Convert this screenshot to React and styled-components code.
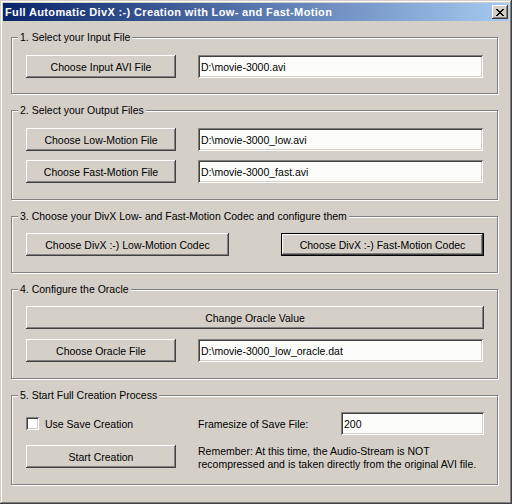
import styled, { createGlobalStyle } from "styled-components";

const GlobalStyle = createGlobalStyle`
  html, body {
    margin: 0;
    padding: 0;
    background: #d4d0c8;
  }
  body {
    font-family: "Liberation Sans", Arial, sans-serif;
    font-size: 10.5px;
    color: #000;
  }
  * {
    box-sizing: border-box;
  }
`;

const Window = styled.div`
  width: 512px;
  height: 504px;
  padding: 3px;
  background: #d4d0c8;
  box-shadow: inset -1px -1px #404040, inset 1px 1px #d4d0c8,
    inset -2px -2px #808080, inset 2px 2px #ffffff;
  display: flex;
  flex-direction: column;
`;

const TitleBar = styled.div`
  height: 18px;
  display: flex;
  align-items: center;
  justify-content: space-between;
  padding: 0 1px 0 2px;
  background: linear-gradient(to right, #0a246a, #a6caf0);
`;

const TitleText = styled.span`
  color: #fff;
  font-weight: bold;
  font-size: 11px;
  letter-spacing: 0.35px;
  white-space: nowrap;
`;

const CloseButton = styled.div`
  width: 16px;
  height: 14px;
  display: flex;
  align-items: center;
  justify-content: center;
  background: #d4d0c8;
  box-shadow: inset -1px -1px #404040, inset 1px 1px #ffffff,
    inset -2px -2px #808080, inset 2px 2px #d4d0c8;
`;

const Body = styled.div`
  flex: 1;
  display: flex;
  flex-direction: column;
  gap: 16px;
  padding: 16px 11px 0 8px;
`;

const Group = styled.div`
  position: relative;
  height: ${(p) => p.$h}px;
  border: 1px solid #808080;
  box-shadow: inset 1px 1px #ffffff, 1px 1px #ffffff;
  padding: ${(p) => p.$pt}px 14px 0 14px;
  display: flex;
  flex-direction: column;
  gap: ${(p) => p.$gap || 9}px;
`;

const Legend = styled.span`
  position: absolute;
  top: -7px;
  left: 6px;
  padding: 0 2px;
  line-height: 13px;
  background: #d4d0c8;
  white-space: nowrap;
`;

const Row = styled.div`
  display: flex;
  align-items: ${(p) => (p.$top ? "flex-start" : "center")};
  gap: ${(p) => (p.$gap === undefined ? 22 : p.$gap)}px;
`;

const Button = styled.div`
  width: ${(p) => p.$w || 150}px;
  height: 23px;
  flex-shrink: 0;
  display: flex;
  align-items: center;
  justify-content: center;
  background: #d4d0c8;
  white-space: nowrap;
  box-shadow: ${(p) =>
    p.$default
      ? "inset 0 0 0 1px #000000, inset -2px -2px #404040, inset 2px 2px #ffffff, inset -3px -3px #808080"
      : "inset -1px -1px #404040, inset 1px 1px #ffffff, inset -2px -2px #808080, inset 2px 2px #d4d0c8"};
`;

const Edit = styled.input`
  width: ${(p) => p.$w || 285}px;
  height: 23px;
  flex-shrink: 0;
  margin: 0;
  border: none;
  outline: none;
  padding: 0 3px;
  font-family: "Liberation Sans", Arial, sans-serif;
  font-size: 10.5px;
  color: #000;
  background: #fcfdfb;
  box-shadow: inset 1px 1px #808080, inset -1px -1px #ffffff,
    inset 2px 2px #404040, inset -2px -2px #d4d0c8;
`;

const CheckLabel = styled.label`
  width: 172px;
  flex-shrink: 0;
  display: flex;
  align-items: center;
  gap: 6px;
  white-space: nowrap;
`;

const CheckBox = styled.span`
  width: 13px;
  height: 13px;
  background: #fff;
  box-shadow: inset 1px 1px #808080, inset -1px -1px #ffffff,
    inset 2px 2px #404040, inset -2px -2px #d4d0c8;
`;

const FieldLabel = styled.span`
  width: 143px;
  flex-shrink: 0;
  white-space: nowrap;
`;

const Note = styled.div`
  line-height: 13px;
  white-space: nowrap;
`;

const CloseGlyph = () => (
  <svg width="8" height="7" viewBox="0 0 8 7" shapeRendering="crispEdges">
    <path
      d="M0 0h2v1h-2zM6 0h2v1h-2zM1 1h2v1h-2zM5 1h2v1h-2zM2 2h2v1h-2zM4 2h2v1h-2zM3 3h2v1h-2zM2 4h2v1h-2zM4 4h2v1h-2zM1 5h2v1h-2zM5 5h2v1h-2zM0 6h2v1h-2zM6 6h2v1h-2z"
      fill="#000"
    />
  </svg>
);

const App = () => {
  return (
    <>
      <GlobalStyle />
      <Window>
        <TitleBar>
          <TitleText>Full Automatic DivX :-) Creation with Low- and Fast-Motion</TitleText>
          <CloseButton>
            <CloseGlyph />
          </CloseButton>
        </TitleBar>
        <Body>
          <Group $h={57} $pt={17}>
            <Legend>1. Select your Input File</Legend>
            <Row>
              <Button>Choose Input AVI File</Button>
              <Edit readOnly value="D:\movie-3000.avi" />
            </Row>
          </Group>

          <Group $h={90} $pt={17} $gap={9}>
            <Legend>2. Select your Output Files</Legend>
            <Row>
              <Button>Choose Low-Motion File</Button>
              <Edit readOnly value="D:\movie-3000_low.avi" />
            </Row>
            <Row>
              <Button>Choose Fast-Motion File</Button>
              <Edit readOnly value="D:\movie-3000_fast.avi" />
            </Row>
          </Group>

          <Group $h={57} $pt={16}>
            <Legend>3. Choose your DivX Low- and Fast-Motion Codec and configure them</Legend>
            <Row $gap={52}>
              <Button $w={203}>Choose DivX :-) Low-Motion Codec</Button>
              <Button $w={203} $default>
                Choose DivX :-) Fast-Motion Codec
              </Button>
            </Row>
          </Group>

          <Group $h={90} $pt={16} $gap={10}>
            <Legend>4. Configure the Oracle</Legend>
            <Row>
              <Button $w={458}>Change Oracle Value</Button>
            </Row>
            <Row>
              <Button>Choose Oracle File</Button>
              <Edit readOnly value="D:\movie-3000_low_oracle.dat" />
            </Row>
          </Group>

          <Group $h={90} $pt={16} $gap={10}>
            <Legend>5. Start Full Creation Process</Legend>
            <Row $gap={0}>
              <CheckLabel>
                <CheckBox />
                Use Save Creation
              </CheckLabel>
              <FieldLabel>Framesize of Save File:</FieldLabel>
              <Edit $w={143} readOnly value="200" />
            </Row>
            <Row $top>
              <Button>Start Creation</Button>
              <Note>
                Remember: At this time, the Audio-Stream is NOT
                <br />
                recompressed and is taken directly from the original AVI file.
              </Note>
            </Row>
          </Group>
        </Body>
      </Window>
    </>
  );
};

export default App;
